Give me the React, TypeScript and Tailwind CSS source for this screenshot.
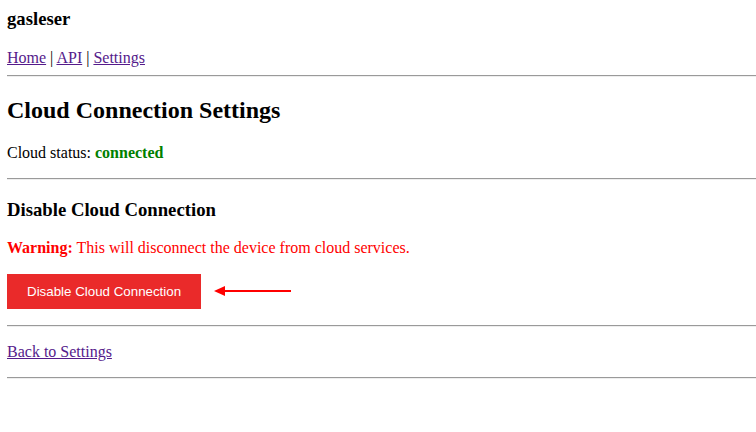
import React from "react"

// ── Small pieces ───────────────────────────────────────────────────────────────

function Rule({ className = "my-2" }: { className?: string }) {
  return (
    <hr className={`${className} h-[2px] border-0 border-t border-b border-t-[#9a9a9a] border-b-[#eeeeee]`} />
  )
}

function NavLink({ children }: { children: React.ReactNode }) {
  return (
    <a href="#" className="text-[#551a8b] underline">
      {children}
    </a>
  )
}

function ArrowLeft() {
  return (
    <svg width="78" height="12" viewBox="0 0 78 12" className="ml-[13px] block">
      <line x1="8" y1="6" x2="77" y2="6" stroke="#ff0000" strokeWidth="2" />
      <polygon points="0,6 11,1 11,11" fill="#ff0000" />
    </svg>
  )
}

// ── Page ───────────────────────────────────────────────────────────────────────

export default function App() {
  return (
    <div className="min-h-screen bg-white pt-2 pl-[7px] font-['Liberation_Serif','Times_New_Roman',serif] text-[16px] leading-[1.15] text-black">
      <h3 className="mb-[19.72px] text-[18.72px] font-bold">gasleser</h3>

      <div>
        <NavLink>Home</NavLink> | <NavLink>API</NavLink> | <NavLink>Settings</NavLink>
      </div>

      <Rule className="mt-[7px] mb-2" />

      <h2 className="mt-[19.92px] mb-[19.92px] text-[24px] font-bold">Cloud Connection Settings</h2>

      <p className="mb-4">
        Cloud status: <b className="font-bold text-[#008000]">connected</b>
      </p>

      <Rule />

      <h3 className="mt-[18.72px] mb-[18.72px] text-[18.72px] font-bold">Disable Cloud Connection</h3>

      <p className="mb-4 text-[#ff0000]">
        <b className="font-bold">Warning:</b> This will disconnect the device from cloud services.
      </p>

      <div className="mb-4 flex items-center">
        <button className="bg-[#ea2a2a] px-5 py-[10px] font-['Liberation_Sans',Arial,sans-serif] text-[13.33px] leading-[15px] text-white">
          Disable Cloud Connection
        </button>
        <ArrowLeft />
      </div>

      <Rule />

      <p className="mt-4 mb-4">
        <NavLink>Back to Settings</NavLink>
      </p>

      <Rule />
    </div>
  )
}
